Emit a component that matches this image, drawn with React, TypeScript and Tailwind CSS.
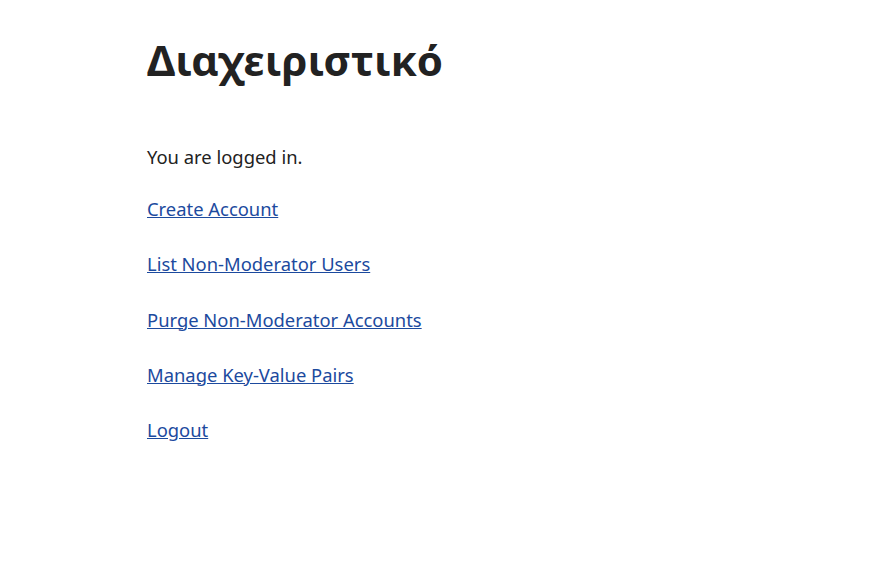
import React from 'react';

const links = [
  'Create Account',
  'List Non-Moderator Users',
  'Purge Non-Moderator Accounts',
  'Manage Key-Value Pairs',
  'Logout',
];

export default function App() {
  return (
    <div className="min-h-[582px] bg-white text-[#222] font-['Noto_Sans',sans-serif]">
      <main className="mx-auto w-[589px] pt-[35px]">
        <h1 className="text-[42px] font-bold leading-[1.2] m-0">Διαχειριστικό</h1>
        <p className="mt-[58px] text-[18.4px] leading-[1.5]">You are logged in.</p>
        <div className="mt-[23.6px] flex flex-col gap-[27.85px]">
          {links.map((l) => (
            <a key={l} href="#" className="text-[18.4px] leading-[1.5] text-[#1c4a9e] underline self-start">
              {l}
            </a>
          ))}
        </div>
      </main>
    </div>
  );
}
